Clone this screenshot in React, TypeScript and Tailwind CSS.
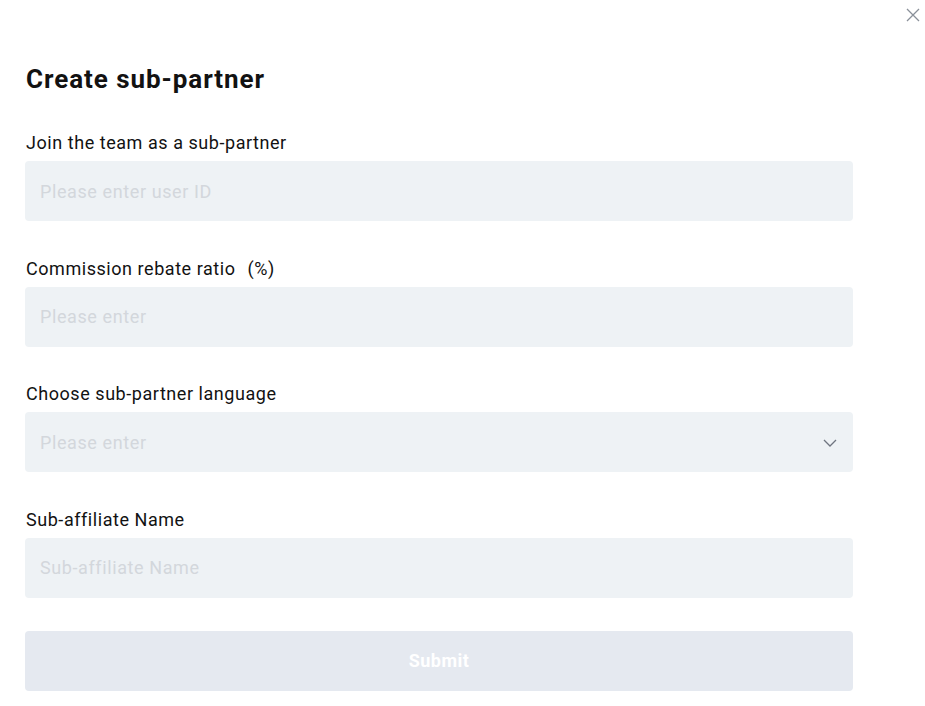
import { useState } from 'react';

const fields = [
  { label: 'Join the team as a sub-partner', placeholder: 'Please enter user ID' },
  { label: 'Commission rebate ratio', unit: '(%)', placeholder: 'Please enter' },
  { label: 'Choose sub-partner language', placeholder: 'Please enter', select: true },
  { label: 'Sub-affiliate Name', placeholder: 'Sub-affiliate Name' },
];

export default function App() {
  const [values, setValues] = useState<string[]>(['', '', '', '']);

  return (
    <div className="relative min-h-[706px] w-[925px] bg-white font-['Roboto',sans-serif] text-[#121212]">
      {/* close button */}
      <button className="absolute right-[5px] top-[7px] flex h-[15px] w-[15px] items-center justify-center text-[#8a9099]">
        <svg width="14" height="14" viewBox="0 0 14 14" fill="none" stroke="currentColor" strokeWidth="1.3">
          <path d="M1 1l12 12M13 1L1 13" />
        </svg>
      </button>

      <div className="w-[853px] pl-[25px] pt-[63px]">
        <h1 className="pl-px text-[26px] font-bold leading-[32px] tracking-[0.95px]">Create sub-partner</h1>

        <div className="mt-[36px] flex flex-col gap-[35.5px]">
          {fields.map((f, i) => (
            <div key={f.label} className="flex flex-col">
              <label className="mb-[6px] pl-px text-[18px] leading-[24px] tracking-[0.55px]">
                {f.label}
                {f.unit && <span className="pl-[12px]">{f.unit}</span>}
              </label>
              <div className="relative flex h-[60px] items-center rounded-[4px] bg-[#eef2f5]">
                <input
                  value={values[i]}
                  onChange={(e) => {
                    const next = [...values];
                    next[i] = e.target.value;
                    setValues(next);
                  }}
                  placeholder={f.placeholder}
                  className="h-full w-full bg-transparent pl-[15px] pr-[40px] text-[18px] tracking-[0.6px] outline-none placeholder:text-[#d3d7dc]"
                />
                {f.select && (
                  <svg className="absolute right-[16px] top-[27px] text-[#6f7580]" width="14" height="8" viewBox="0 0 14 8" fill="none" stroke="currentColor" strokeWidth="1.3">
                    <path d="M1 1l6 6 6-6" />
                  </svg>
                )}
              </div>
            </div>
          ))}
        </div>

        <button className="mt-[33px] h-[60px] w-full rounded-[4px] bg-[#e5e9f0] text-[18px] font-bold tracking-[0.5px] text-white">
          Submit
        </button>
      </div>
    </div>
  );
}
